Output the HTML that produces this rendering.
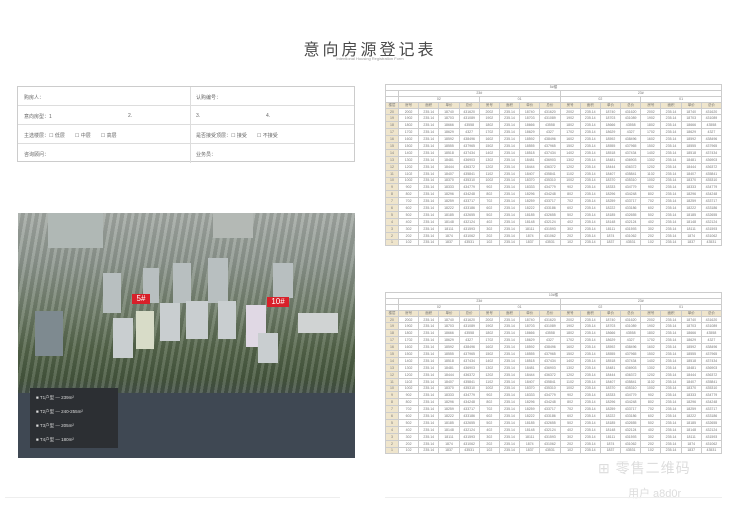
<!DOCTYPE html>
<html><head><meta charset="utf-8"><style>
*{margin:0;padding:0;box-sizing:border-box}
body{width:740px;height:523px;background:#fff;position:relative;overflow:hidden;font-family:"Liberation Sans","Noto Sans CJK SC",sans-serif;color:#555}
.abs{position:absolute}
.title{left:0;width:740px;top:36px;text-align:center;font-size:16px;letter-spacing:3px;color:#4a4a4a}
.sub{left:0;width:740px;top:56px;text-align:center;font-size:4px;color:#999}
.form{left:17px;top:86px;width:338px;height:76px;border:1px solid #ccc}
.form .r{position:absolute;left:0;width:336px;height:19px;border-bottom:1px solid #ddd;font-size:5px;color:#666}
.form .r span{position:absolute;top:7px}
.form .v{position:absolute;left:172px;top:0;width:1px;height:76px;background:#ddd}
.photo{left:18px;top:213px;width:337px;height:245px;overflow:hidden;background:
repeating-linear-gradient(100deg,rgba(255,255,255,.12) 0 3px,rgba(0,0,0,.08) 3px 7px),
linear-gradient(180deg,#a4aaa5 0%,#8e978f 20%,#6f7d69 40%,#55664b 55%,#46573e 68%,#44504c 75%,#4b5662 82%,#3d4550 100%)}
.b{position:absolute;background:#c9ced0}
.tbl{position:absolute;border-collapse:collapse;font-size:3.5px;color:#777;table-layout:fixed}
.tbl td{border:0.5px solid #ccc;height:6.9px;text-align:center;overflow:hidden;white-space:nowrap;padding:0}
.tbl td.f{background:#efe5cc}
.tbl tr.h td{background:#efe5cc;height:6px}
.tbl tr.t td{height:5.8px;background:#fff}
</style></head><body>
<div class="abs title">意向房源登记表</div>
<div class="abs sub">Intentional Housing Registration Form</div>
<div class="abs form">
 <div class="r" style="top:0"><span style="left:6px">购房人：</span><span style="left:178px">认购编号：</span></div>
 <div class="r" style="top:19px"><span style="left:6px">意向房型：1</span><span style="left:110px">2.</span><span style="left:178px">3.</span><span style="left:248px">4.</span></div>
 <div class="r" style="top:38px"><span style="left:6px">主选楼层：☐ 低层　　☐ 中层　　☐ 高层</span><span style="left:178px">是否接受顶层：☐ 接受　　☐ 不接受</span></div>
 <div class="r" style="top:57px;border:0"><span style="left:6px">咨询顾问：</span><span style="left:178px">业务员：</span></div>
 <div class="v"></div>
</div>
<div class="abs photo">
 <div class="b" style="left:30px;top:0;width:55px;height:35px;background:#b0b8b5"></div>
 <div class="b" style="left:195px;top:0;width:40px;height:25px;background:#b4b9b5"></div>
 <div class="b" style="left:85px;top:60px;width:18px;height:40px;background:#b8bfc0"></div>
 <div class="b" style="left:125px;top:55px;width:16px;height:35px;background:#b8bfc0"></div>
 <div class="b" style="left:155px;top:50px;width:18px;height:40px;background:#b8bfc0"></div>
 <div class="b" style="left:190px;top:45px;width:20px;height:45px;background:#b8bfc0"></div>
 <div class="b" style="left:255px;top:50px;width:20px;height:35px;background:#b8bfc0"></div>
 <div class="b" style="left:17px;top:98px;width:28px;height:45px;background:#7e8a90"></div>
 <div class="b" style="left:95px;top:105px;width:20px;height:40px"></div>
 <div class="b" style="left:118px;top:98px;width:18px;height:38px;background:#d8dcc8"></div>
 <div class="b" style="left:142px;top:90px;width:20px;height:38px"></div>
 <div class="b" style="left:168px;top:88px;width:22px;height:38px"></div>
 <div class="b" style="left:200px;top:88px;width:18px;height:38px"></div>
 <div class="b" style="left:228px;top:92px;width:20px;height:42px;background:#e0d8e4"></div>
 <div class="b" style="left:240px;top:120px;width:20px;height:30px"></div>
 <div class="b" style="left:280px;top:100px;width:40px;height:20px;background:#d0d3d3"></div>
 <div class="abs" style="left:114px;top:81px;width:18px;height:10px;background:#d8202a;color:#fff;font-size:8px;text-align:center;line-height:10px">5#</div>
 <div class="abs" style="left:249px;top:84px;width:22px;height:10px;background:#d8202a;color:#fff;font-size:8px;text-align:center;line-height:10px">10#</div>
 <div class="abs" style="left:0;top:180px;width:337px;height:65px;background:#3f4853"></div>
 <div class="abs" style="left:12px;top:175px;width:88px;height:60px;background:#2c2f33;color:#ddd;font-size:4.5px;line-height:14px;padding:3px 6px">■ T1户型 — 239m²<br>■ T2户型 — 240-255m²<br>■ T3户型 — 205m²<br>■ T4户型 — 180m²</div>
</div>
<table class="tbl abs" style="left:385px;top:84px;width:337px" id="t1"></table>
<table class="tbl abs" style="left:385px;top:292px;width:337px" id="t2"></table>
<div class="abs" style="left:598px;top:458px;font-size:14px;color:#ddd;letter-spacing:1px">⊞ 零售二维码</div>
<div class="abs" style="left:628px;top:485px;font-size:11px;color:#ddd">用户 a8d0r</div>
<div class="abs" style="left:5px;top:497px;width:335px;height:1px;background:#eee"></div>
<div class="abs" style="left:385px;top:497px;width:337px;height:1px;background:#eee"></div>
<script>
function build(id,name){
 var t=document.getElementById(id),h='<colgroup><col style="width:13px">';
 for(var i=0;i<16;i++)h+='<col>';h+='</colgroup>';
 h+='<tr class="t"><td colspan="17">'+name+'</td></tr>';
 h+='<tr class="t"><td></td><td colspan="8">23#</td><td colspan="8">23#</td></tr>';
 h+='<tr class="t"><td></td><td colspan="4">02</td><td colspan="4">01</td><td colspan="4">02</td><td colspan="4">01</td></tr>';
 h+='<tr class="h"><td>楼层</td>';
 for(var i=0;i<4;i++)h+='<td>房号</td><td>面积</td><td>单价</td><td>总价</td>';
 h+='</tr>';
 for(var r=20;r>=1;r--){h+='<tr><td class="f">'+r+'</td>';
  for(var i=0;i<4;i++)h+='<td>'+r+'02</td><td>235.14</td><td>18'+(r*37%900)+'</td><td>43'+(r*531%9000)+'</td>';
  h+='</tr>';}
 t.innerHTML=h;
}
build('t1','5#楼');build('t2','10#楼');
</script>
</body></html>
